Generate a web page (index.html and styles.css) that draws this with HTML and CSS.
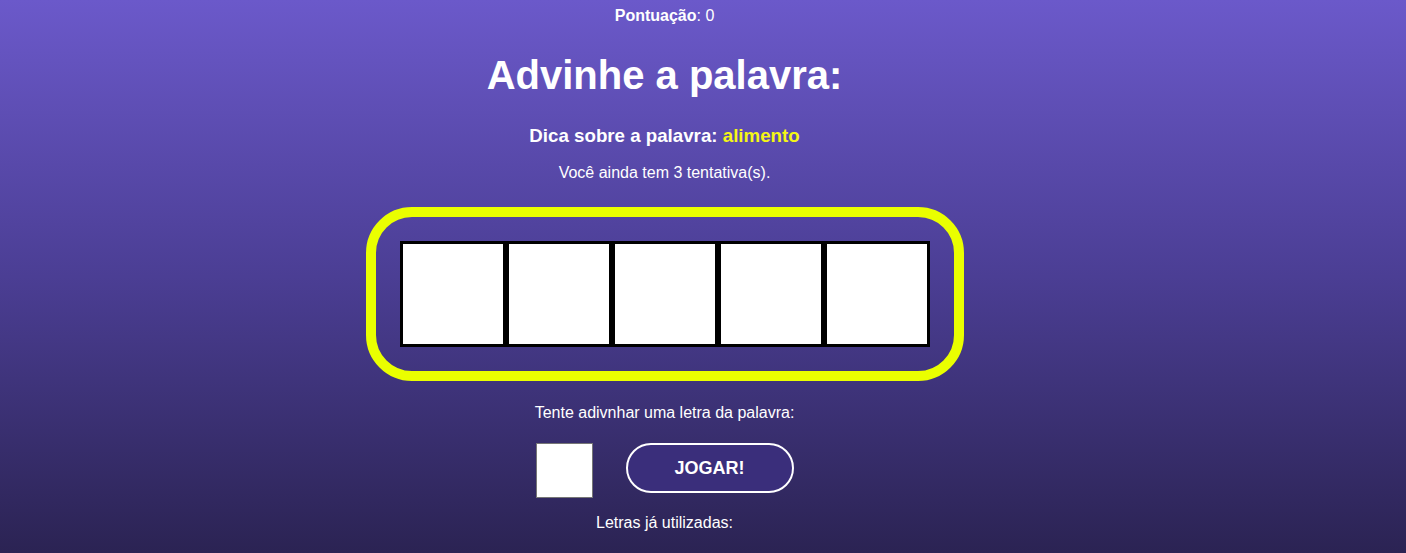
FILE: index.html
```html
<!DOCTYPE html>
<html lang="pt-BR">
<head>
<meta charset="utf-8">
<title>Advinhe a palavra</title>
<link rel="stylesheet" href="styles.css">
</head>
<body>
<main class="game">
  <p class="score"><strong>Pontuação</strong>: 0</p>
  <h1 class="title">Advinhe a palavra:</h1>
  <p class="hint">Dica sobre a palavra: <span class="hint-word">alimento</span></p>
  <p class="tries">Você ainda tem 3 tentativa(s).</p>
  <div class="word-frame">
    <div class="slots">
      <div class="slot"></div>
      <div class="slot"></div>
      <div class="slot"></div>
      <div class="slot"></div>
      <div class="slot"></div>
    </div>
  </div>
  <p class="prompt">Tente adivnhar uma letra da palavra:</p>
  <div class="guess-row">
    <input class="letter-input" type="text" maxlength="1" aria-label="Letra">
    <button class="play-btn" type="button">JOGAR!</button>
  </div>
  <p class="used">Letras já utilizadas:</p>
</main>
</body>
</html>
```
FILE: styles.css
```css
html, body {
  margin: 0;
  padding: 0;
  height: 100%;
}
body {
  background: linear-gradient(to bottom, #6b59ca 0%, #4b3e94 50%, #2b2353 100%);
  font-family: "Liberation Sans", Arial, sans-serif;
  color: #ffffff;
  overflow: hidden;
}
.game {
  box-sizing: border-box;
  width: 1329px;
  display: flex;
  flex-direction: column;
  align-items: center;
  padding-top: 7px;
}
.score {
  margin: 0;
  font-size: 16px;
  line-height: 18px;
}
.title {
  margin: 27px 0 0;
  font-size: 40px;
  line-height: 46px;
  font-weight: bold;
}
.hint {
  margin: 27px 0 0;
  font-size: 18.72px;
  line-height: 22px;
  font-weight: bold;
}
.hint-word {
  color: #f4f614;
}
.tries {
  margin: 17px 0 0;
  font-size: 16px;
  line-height: 18px;
}
.word-frame {
  margin-top: 25px;
  border: 10px solid #eaff00;
  border-radius: 46px;
  padding: 24px;
}
.slots {
  display: flex;
}
.slot {
  width: 100px;
  height: 100px;
  background: #ffffff;
  border: 3px solid #000000;
}
.prompt {
  margin: 23px 0 0;
  font-size: 16px;
  line-height: 18px;
}
.guess-row {
  margin-top: 21px;
  display: flex;
  align-items: flex-start;
  gap: 33px;
}
.letter-input {
  box-sizing: border-box;
  width: 57px;
  height: 55px;
  margin: 0;
  padding: 0;
  border: 1px solid #767676;
  background: #ffffff;
  font-size: 24px;
  text-align: center;
}
.play-btn {
  box-sizing: border-box;
  width: 168px;
  height: 50px;
  border: 2px solid #ffffff;
  border-radius: 25px;
  background: #3a2e7b;
  color: #ffffff;
  font-family: "Liberation Sans", Arial, sans-serif;
  font-size: 18px;
  font-weight: bold;
  cursor: pointer;
}
.used {
  margin: 16px 0 0;
  font-size: 16px;
  line-height: 18px;
}
```
